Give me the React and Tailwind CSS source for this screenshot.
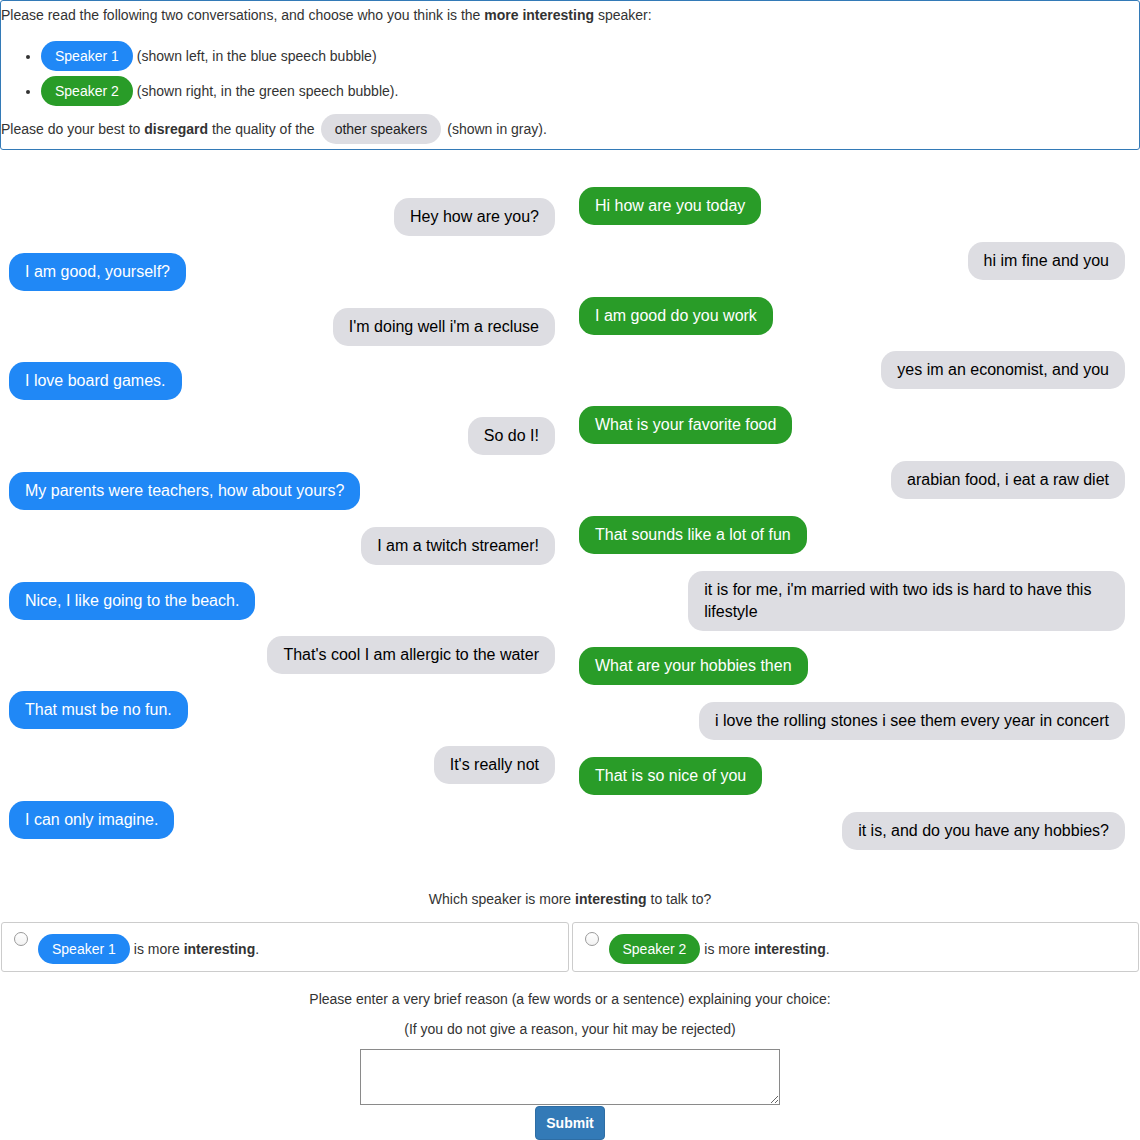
import React from "react";

const FONT = { fontFamily: '"Liberation Sans", Arial, Helvetica, sans-serif' };

const left = [
  ["g", "Hey how are you?"],
  ["b", "I am good, yourself?"],
  ["g", "I'm doing well i'm a recluse"],
  ["b", "I love board games."],
  ["g", "So do I!"],
  ["b", "My parents were teachers, how about yours?"],
  ["g", "I am a twitch streamer!"],
  ["b", "Nice, I like going to the beach."],
  ["g", "That's cool I am allergic to the water"],
  ["b", "That must be no fun."],
  ["g", "It's really not"],
  ["b", "I can only imagine."],
];

const right = [
  ["c", "Hi how are you today"],
  ["g", "hi im fine and you"],
  ["c", "I am good do you work"],
  ["g", "yes im an economist, and you"],
  ["c", "What is your favorite food"],
  ["g", "arabian food, i eat a raw diet"],
  ["c", "That sounds like a lot of fun"],
  ["g", "it is for me, i'm married with two ids is hard to have this lifestyle"],
  ["c", "What are your hobbies then"],
  ["g", "i love the rolling stones i see them every year in concert"],
  ["c", "That is so nice of you"],
  ["g", "it is, and do you have any hobbies?"],
];

function Bubble({ kind, text }) {
  if (kind === "g") {
    return (
      <div className="self-end max-w-[80%] rounded-[15px] bg-[#dddde2] px-[16px] py-[8px] text-[16px] leading-[22px] text-black">
        {text}
      </div>
    );
  }
  if (kind === "b") {
    return (
      <div className="self-start max-w-[80%] rounded-[15px] bg-[#2088f6] px-[16px] py-[8px] text-[16px] leading-[22px] text-white">
        {text}
      </div>
    );
  }
  return (
    <div className="self-start max-w-[80%] rounded-[15px] bg-[#299c28] px-[16px] py-[8px] text-[16px] leading-[22px] text-white">
      {text}
    </div>
  );
}

function Pill({ color, children }) {
  const cls =
    color === "blue"
      ? "bg-[#2088f6] text-white"
      : color === "green"
      ? "bg-[#299c28] text-white"
      : "bg-[#dddde2] text-[#222]";
  return (
    <span className={`inline-flex h-[30px] items-center rounded-[15px] px-[14px] text-[14px] leading-[20px] ${cls}`}>
      {children}
    </span>
  );
}

function Radio() {
  return <span className="block h-[14px] w-[14px] shrink-0 rounded-full border border-[#9a9a9a] bg-gradient-to-b from-[#ffffff] to-[#f2f2f2]" />;
}

export default function App() {
  return (
    <div style={FONT} className="w-[1140px] bg-white text-[14px] leading-[20px] text-[#333]">
      {/* Instructions */}
      <div className="rounded-[3px] border border-[#337ab7] pt-[4px] pb-[5px]">
        <p className="h-[20px]">
          Please read the following two conversations, and choose who you think is the <b>more interesting</b> speaker:
        </p>
        <ul className="mt-[16px] list-disc pl-[40px]">
          <li className="h-[30px]">
            <div className="flex h-[30px] items-center">
              <Pill color="blue">Speaker 1</Pill>
              <span className="ml-[4px]">(shown left, in the blue speech bubble)</span>
            </div>
          </li>
          <li className="mt-[5px] h-[30px]">
            <div className="flex h-[30px] items-center">
              <Pill color="green">Speaker 2</Pill>
              <span className="ml-[4px]">(shown right, in the green speech bubble).</span>
            </div>
          </li>
        </ul>
        <div className="mt-[8px] flex h-[30px] items-center">
          <span>
            Please do your best to <b>disregard</b> the quality of the
          </span>
          <span className="ml-[6px]">
            <Pill color="gray">other speakers</Pill>
          </span>
          <span className="ml-[6px]">(shown in gray).</span>
        </div>
      </div>

      {/* Conversations */}
      <div className="flex items-start">
        <div className="flex w-[570px] flex-col gap-[16.8px] pt-[48px] pl-[9px] pr-[15px]">
          {left.map(([k, t], i) => (
            <Bubble key={i} kind={k} text={t} />
          ))}
        </div>
        <div className="flex w-[570px] flex-col gap-[16.8px] pt-[37px] pl-[9px] pr-[15px]">
          {right.map(([k, t], i) => (
            <Bubble key={i} kind={k} text={t} />
          ))}
        </div>
      </div>

      {/* Question */}
      <p className="mt-[39px] text-center">
        Which speaker is more <b>interesting</b> to talk to?
      </p>
      <div className="mt-[13px] grid grid-cols-2 gap-[3px] px-[1px]">
        <div className="flex h-[50px] items-start rounded-[3px] border border-[#cccccc]">
          <div className="ml-[12px] mt-[9px]">
            <Radio />
          </div>
          <div className="ml-[10px] mt-[11px] flex items-center">
            <Pill color="blue">Speaker 1</Pill>
            <span className="ml-[4px]">
              is more <b>interesting</b>.
            </span>
          </div>
        </div>
        <div className="flex h-[50px] items-start rounded-[3px] border border-[#cccccc]">
          <div className="ml-[12px] mt-[9px]">
            <Radio />
          </div>
          <div className="ml-[10px] mt-[11px] flex items-center">
            <Pill color="green">Speaker 2</Pill>
            <span className="ml-[4px]">
              is more <b>interesting</b>.
            </span>
          </div>
        </div>
      </div>

      <p className="mt-[17px] text-center">
        Please enter a very brief reason (a few words or a sentence) explaining your choice:
      </p>
      <p className="mt-[10px] text-center">(If you do not give a reason, your hit may be rejected)</p>
      <div className="mt-[10px] flex flex-col items-center">
        <textarea className="block h-[56px] w-[420px] border border-[#8a8a8a] bg-white" />
        <button className="mt-[1px] h-[34px] w-[70px] rounded-[4px] border border-[#2e6da4] bg-[#337ab7] text-[14px] font-bold leading-[20px] text-white">
          Submit
        </button>
      </div>
    </div>
  );
}
